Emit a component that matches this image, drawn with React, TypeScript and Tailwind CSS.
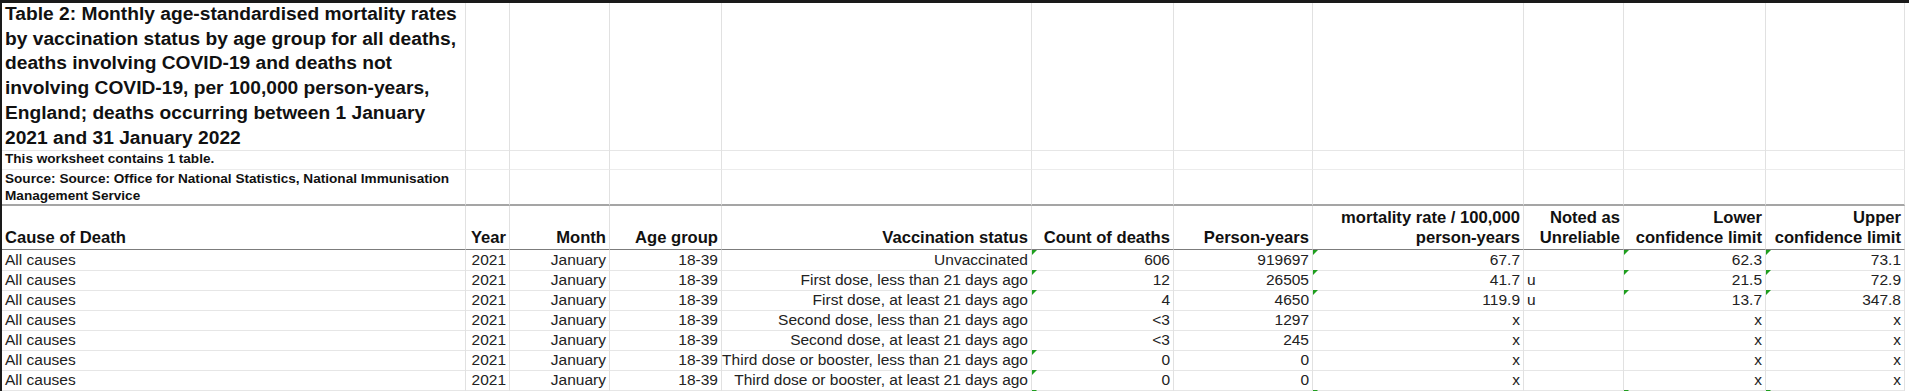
import React from "react";

const GRID =
  "grid grid-cols-[464px_44px_100px_112px_310px_142px_139px_211px_100px_142px_139px_1fr]";

function Tri() {
  return (
    <svg className="absolute left-0 top-0" width="5" height="5" viewBox="0 0 5 5">
      <path d="M0 0H5L0 5Z" fill="#1f9e1f" />
    </svg>
  );
}

type Row = { c: string[]; t: number[] };

const rows: Row[] = [
  { c: ["All causes", "2021", "January", "18-39", "Unvaccinated", "606", "919697", "67.7", "", "62.3", "73.1"], t: [5, 7, 9, 10] },
  { c: ["All causes", "2021", "January", "18-39", "First dose, less than 21 days ago", "12", "26505", "41.7", "u", "21.5", "72.9"], t: [5, 7, 9, 10] },
  { c: ["All causes", "2021", "January", "18-39", "First dose, at least 21 days ago", "4", "4650", "119.9", "u", "13.7", "347.8"], t: [5, 7, 9, 10] },
  { c: ["All causes", "2021", "January", "18-39", "Second dose, less than 21 days ago", "<3", "1297", "x", "", "x", "x"], t: [] },
  { c: ["All causes", "2021", "January", "18-39", "Second dose, at least 21 days ago", "<3", "245", "x", "", "x", "x"], t: [] },
  { c: ["All causes", "2021", "January", "18-39", "Third dose or booster, less than 21 days ago", "0", "0", "x", "", "x", "x"], t: [5] },
  { c: ["All causes", "2021", "January", "18-39", "Third dose or booster, at least 21 days ago", "0", "0", "x", "", "x", "x"], t: [5] },
  { c: ["", "", "", "", "", "", "", "", "", "", ""], t: [5, 7, 9, 10] },
];

const headers: string[][] = [
  ["Cause of Death"],
  ["Year"],
  ["Month"],
  ["Age group"],
  ["Vaccination status"],
  ["Count of deaths"],
  ["Person-years"],
  ["mortality rate / 100,000", "person-years"],
  ["Noted as", "Unreliable"],
  ["Lower", "confidence limit"],
  ["Upper", "confidence limit"],
];

function EmptyCells({ from, cls }: { from: number; cls: string }) {
  const out = [];
  for (let i = from; i < 12; i++) {
    out.push(
      <div
        key={i}
        className={i < 11 ? `border-r border-r-[#e1e1e1] ${cls}` : ""}
      />
    );
  }
  return <>{out}</>;
}

export default function App() {
  return (
    <div className="w-[1909px] h-[391px] overflow-hidden bg-white border-t-[3px] border-t-[#1a1a1a] font-['Liberation_Sans',Arial,sans-serif]">
      <div className="border-l-2 border-l-[#1a1a1a] h-full">
        {/* Title row */}
        <div className={`${GRID} h-[146px]`}>
          <div className="border-r border-r-[#e1e1e1] border-b border-b-[#e6e6e6] pl-[3px]">
            <div className="-mt-px text-[19.2px] leading-[24.7px] font-bold text-[#111] whitespace-nowrap">
              <div>Table 2: Monthly age-standardised mortality rates</div>
              <div>by vaccination status by age group for all deaths,</div>
              <div>deaths involving COVID-19 and deaths not</div>
              <div>involving COVID-19, per 100,000 person-years,</div>
              <div>England; deaths occurring between 1 January</div>
              <div>2021 and 31 January 2022</div>
            </div>
          </div>
          <EmptyCells from={1} cls="border-b border-b-[#e6e6e6]" />
        </div>
        {/* Row 2 */}
        <div className={`${GRID} h-[21px]`}>
          <div className="border-r border-r-[#e1e1e1] border-b border-b-[#ececec] pl-[3px] text-[13.6px] leading-[20px] font-bold text-[#111] whitespace-nowrap">
            This worksheet contains 1 table.
          </div>
          <EmptyCells from={1} cls="border-b border-b-[#ececec]" />
        </div>
        {/* Row 3 */}
        <div className={`${GRID} h-[36px]`}>
          <div className="border-r border-r-[#e1e1e1] border-b-2 border-b-[#a5a5a5] pl-[3px] text-[13.6px] leading-[17px] font-bold text-[#111] whitespace-nowrap">
            <div>Source: Source: Office for National Statistics, National Immunisation</div>
            <div>Management Service</div>
          </div>
          <EmptyCells from={1} cls="border-b-2 border-b-[#a5a5a5]" />
        </div>
        {/* Header row */}
        <div className={`${GRID} h-[44px]`}>
          {headers.map((h, i) => (
            <div
              key={i}
              className={`flex flex-col justify-end border-r border-r-[#e1e1e1] border-b border-b-[#7c7c7c] text-[16.6px] leading-[20.7px] font-bold text-[#111] whitespace-nowrap ${
                i === 0 ? "items-start pl-[3px]" : "items-end pr-[3px]"
              }`}
            >
              {h.map((line, j) => (
                <div key={j}>{line}</div>
              ))}
            </div>
          ))}
          <div />
        </div>
        {/* Data rows */}
        {rows.map((r, ri) => (
          <div key={ri} className={`${GRID} h-[20px]`}>
            {r.c.map((v, i) => (
              <div
                key={i}
                className={`relative flex h-full border-r border-r-[#e1e1e1] border-b border-b-[#e6e6e6] text-[15.5px] leading-[20px] text-[#222] whitespace-nowrap ${
                  i === 0 || i === 8 ? "justify-start pl-[3px]" : "justify-end pr-[3px]"
                }`}
              >
                {r.t.includes(i) && <Tri />}
                <span>{v}</span>
              </div>
            ))}
            <div />
          </div>
        ))}
      </div>
    </div>
  );
}
